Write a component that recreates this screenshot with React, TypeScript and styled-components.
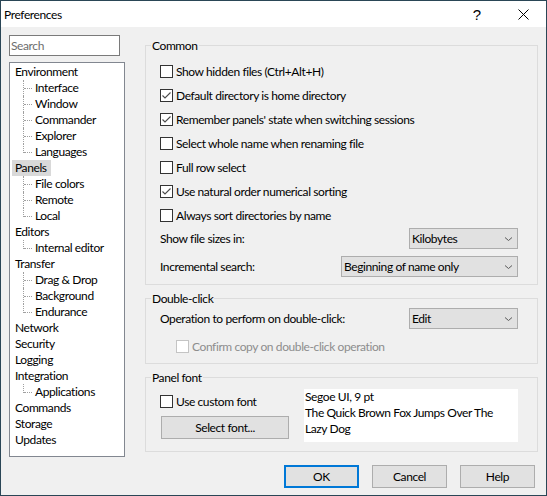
import React from 'react';
import styled, { createGlobalStyle, css } from 'styled-components';

const FONT = 'Lato, "Liberation Sans", Arial, sans-serif';
const TRACKING = '-0.4px';

const GlobalStyle = createGlobalStyle`
  html, body {
    margin: 0;
    padding: 0;
    background: #f0f0f0;
  }
  body {
    font-family: ${FONT};
    font-size: 12px;
    letter-spacing: ${TRACKING};
    color: #000;
  }
  *, *::before, *::after {
    box-sizing: border-box;
  }
`;

const Window = styled.div`
  width: 547px;
  height: 496px;
  border: 1px solid #2a4656;
  background: #f0f0f0;
  display: flex;
  flex-direction: column;
`;

const TitleBar = styled.div`
  height: 26px;
  background: #fff;
  display: flex;
  align-items: center;
  flex-shrink: 0;
`;

const Title = styled.div`
  flex: 1;
  padding-left: 3px;
  font-size: 12px;
`;

const CaptionButton = styled.div`
  width: 46px;
  height: 100%;
  display: flex;
  align-items: center;
  justify-content: center;
  font-family: "Liberation Sans", Arial, sans-serif;
  font-size: 15px;
  letter-spacing: 0;
`;

const Body = styled.div`
  flex: 1;
  display: flex;
  flex-direction: column;
  padding: 8px 0 0 8px;
`;

const Main = styled.div`
  display: flex;
  align-items: flex-start;
`;

const LeftCol = styled.div`
  width: 116px;
  display: flex;
  flex-direction: column;
  gap: 6px;
`;

const SearchBox = styled.input`
  width: 111px;
  height: 21px;
  border: 1px solid #7a7a7a;
  background: #fff;
  padding: 0 0 0 1px;
  font-family: ${FONT};
  font-size: 12px;
  letter-spacing: ${TRACKING};
  outline: none;
  &::placeholder {
    color: #6d6d6d;
  }
`;

const Tree = styled.div`
  width: 116px;
  height: 395px;
  border: 1px solid #828790;
  background: #fff;
  padding: 1px 0 0 2px;
`;

const TreeRow = styled.div<{ $child?: boolean; $last?: boolean }>`
  height: 16px;
  line-height: 16px;
  position: relative;
  white-space: nowrap;
  ${(p) =>
    p.$child &&
    css`
      padding-left: 20px;
      &::before {
        content: '';
        position: absolute;
        left: 11px;
        top: 0;
        height: ${p.$last ? '9px' : '16px'};
        border-left: 1px dotted #a0a0a0;
      }
      &::after {
        content: '';
        position: absolute;
        left: 12px;
        top: 8px;
        width: 8px;
        border-top: 1px dotted #a0a0a0;
      }
    `}
`;

const TreeLabel = styled.span<{ $selected?: boolean }>`
  display: inline-block;
  padding: 0 4px 0 3px;
  background: ${(p) => (p.$selected ? '#d9d9d9' : 'transparent')};
`;

const RightCol = styled.div`
  margin-left: 20px;
  width: 393px;
  display: flex;
  flex-direction: column;
  gap: 5px;
  padding-top: 2px;
`;

const Group = styled.fieldset<{ $pad: string }>`
  margin: 0;
  border: 1px solid #dcdcdc;
  padding: ${(p) => p.$pad};
  min-width: 0;
`;

const Legend = styled.legend`
  padding: 2px 1px 0;
  margin-left: -9px;
  line-height: 14px;
  font-size: 12px;
`;

const CheckRow = styled.label<{ $h?: number; $indent?: number; $disabled?: boolean }>`
  display: flex;
  align-items: center;
  gap: 3px;
  height: ${(p) => p.$h ?? 24}px;
  padding-left: ${(p) => p.$indent ?? 0}px;
  color: ${(p) => (p.$disabled ? '#8d8d8d' : '#000')};
`;

const Box = styled.span<{ $disabled?: boolean }>`
  width: 13px;
  height: 13px;
  flex-shrink: 0;
  border: 1px solid ${(p) => (p.$disabled ? '#c4c4c4' : '#333')};
  background: #fff;
  display: flex;
`;

const FieldRow = styled.div<{ $mt?: number }>`
  display: flex;
  align-items: center;
  justify-content: space-between;
  height: 21px;
  margin-top: ${(p) => p.$mt ?? 0}px;
`;

const Combo = styled.div<{ $w: number }>`
  width: ${(p) => p.$w}px;
  height: 21px;
  border: 1px solid #adadad;
  background: #e1e1e1;
  display: flex;
  align-items: center;
  justify-content: space-between;
  padding: 0 5px 0 2px;
`;

const FontRow = styled.div`
  display: flex;
  align-items: flex-start;
  margin-top: 4px;
`;

const FontLeft = styled.div`
  width: 129px;
  padding-top: 4px;
  display: flex;
  flex-direction: column;
`;

const PushButton = styled.button<{ $w: number; $default?: boolean }>`
  width: ${(p) => p.$w}px;
  height: 23px;
  border: ${(p) => (p.$default ? '2px solid #0078d7' : '1px solid #adadad')};
  background: #e1e1e1;
  font-family: ${FONT};
  font-size: 12px;
  letter-spacing: ${TRACKING};
  color: #000;
  padding: 0;
  flex-shrink: 0;
`;

const SelectFontButton = styled(PushButton)`
  margin: 7px 0 0 1px;
`;

const Preview = styled.div`
  margin-left: 15px;
  width: 214px;
  height: 53px;
  background: #fff;
  padding: 0 1px;
  line-height: 16px;
`;

const Footer = styled.div`
  display: flex;
  justify-content: flex-end;
  gap: 13px;
  padding-right: 11px;
  margin-top: 8px;
`;

type TreeNode = { label: string; selected?: boolean; children?: string[] };

const tree: TreeNode[] = [
  { label: 'Environment', children: ['Interface', 'Window', 'Commander', 'Explorer', 'Languages'] },
  { label: 'Panels', selected: true, children: ['File colors', 'Remote', 'Local'] },
  { label: 'Editors', children: ['Internal editor'] },
  { label: 'Transfer', children: ['Drag & Drop', 'Background', 'Endurance'] },
  { label: 'Network' },
  { label: 'Security' },
  { label: 'Logging' },
  { label: 'Integration', children: ['Applications'] },
  { label: 'Commands' },
  { label: 'Storage' },
  { label: 'Updates' },
];

const common: [string, boolean][] = [
  ['Show hidden files (Ctrl+Alt+H)', false],
  ['Default directory is home directory', true],
  ["Remember panels' state when switching sessions", true],
  ['Select whole name when renaming file', false],
  ['Full row select', false],
  ['Use natural order numerical sorting', true],
  ['Always sort directories by name', false],
];

const Check: React.FC<{ checked?: boolean; disabled?: boolean }> = ({ checked, disabled }) => (
  <Box $disabled={disabled}>
    {checked && (
      <svg width="11" height="11" viewBox="0 0 11 11">
        <polyline points="1.5,5.5 4,8 9.5,2.5" fill="none" stroke="#4a4a4a" strokeWidth="1.1" />
      </svg>
    )}
  </Box>
);

const Chevron = () => (
  <svg width="7" height="4" viewBox="0 0 7 4">
    <polyline points="0,0.5 3.5,3.5 7,0.5" fill="none" stroke="#5a5a5a" strokeWidth="1" />
  </svg>
);

const Dropdown: React.FC<{ value: string; width: number }> = ({ value, width }) => (
  <Combo $w={width}>
    <span>{value}</span>
    <Chevron />
  </Combo>
);

export default function App() {
  return (
    <>
      <GlobalStyle />
      <Window>
        <TitleBar>
          <Title>Preferences</Title>
          <CaptionButton>?</CaptionButton>
          <CaptionButton>
            <svg width="11" height="11" viewBox="0 0 11 11">
              <path d="M0.5 0.5 L10.5 10.5 M10.5 0.5 L0.5 10.5" stroke="#000" strokeWidth="1" />
            </svg>
          </CaptionButton>
        </TitleBar>
        <Body>
          <Main>
            <LeftCol>
              <SearchBox placeholder="Search" />
              <Tree>
                {tree.map((node) => (
                  <React.Fragment key={node.label}>
                    <TreeRow>
                      <TreeLabel $selected={node.selected}>{node.label}</TreeLabel>
                    </TreeRow>
                    {node.children?.map((c, i) => (
                      <TreeRow key={c} $child $last={i === node.children!.length - 1}>
                        <TreeLabel>{c}</TreeLabel>
                      </TreeRow>
                    ))}
                  </React.Fragment>
                ))}
              </Tree>
            </LeftCol>
            <RightCol>
              <Group $pad="6px 19px 7px 14px">
                <Legend>Common</Legend>
                {common.map(([label, checked]) => (
                  <CheckRow key={label}>
                    <Check checked={checked} />
                    {label}
                  </CheckRow>
                ))}
                <FieldRow $mt={1}>
                  <span>Show file sizes in:</span>
                  <Dropdown value="Kilobytes" width={109} />
                </FieldRow>
                <FieldRow $mt={7}>
                  <span>Incremental search:</span>
                  <Dropdown value="Beginning of name only" width={177} />
                </FieldRow>
              </Group>
              <Group $pad="2px 19px 7px 14px">
                <Legend>Double-click</Legend>
                <FieldRow>
                  <span>Operation to perform on double-click:</span>
                  <Dropdown value="Edit" width={109} />
                </FieldRow>
                <CheckRow $h={20} $indent={16} $disabled style={{ marginTop: 7 }}>
                  <Check disabled />
                  Confirm copy on double-click operation
                </CheckRow>
              </Group>
              <Group $pad="0 19px 9px 14px">
                <Legend>Panel font</Legend>
                <FontRow>
                  <FontLeft>
                    <CheckRow $h={16}>
                      <Check />
                      Use custom font
                    </CheckRow>
                    <SelectFontButton $w={128}>Select font...</SelectFontButton>
                  </FontLeft>
                  <Preview>
                    Segoe UI, 9 pt
                    <br />
                    The Quick Brown Fox Jumps Over The Lazy Dog
                  </Preview>
                </FontRow>
              </Group>
            </RightCol>
          </Main>
          <Footer>
            <PushButton $w={75} $default>
              OK
            </PushButton>
            <PushButton $w={75}>Cancel</PushButton>
            <PushButton $w={75}>Help</PushButton>
          </Footer>
        </Body>
      </Window>
    </>
  );
}
